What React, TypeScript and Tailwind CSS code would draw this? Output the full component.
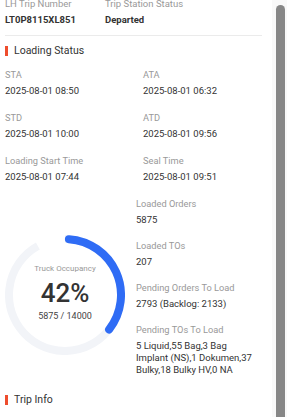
import React from "react";

const schedule = [
  { label: "STA", value: "2025-08-01 08:50" },
  { label: "ATA", value: "2025-08-01 06:32" },
  { label: "STD", value: "2025-08-01 10:00" },
  { label: "ATD", value: "2025-08-01 09:56" },
  { label: "Loading Start Time", value: "2025-08-01 07:44" },
  { label: "Seal Time", value: "2025-08-01 09:51" },
];

const counts = [
  { label: "Loaded Orders", value: "5875" },
  { label: "Loaded TOs", value: "207" },
  { label: "Pending Orders To Load", value: "2793 (Backlog: 2133)" },
  {
    label: "Pending TOs To Load",
    value: "5 Liquid,55 Bag,3 Bag Implant (NS),1 Dokumen,37 Bulky,18 Bulky HV,0 NA",
  },
];

function point(deg: number, r: number) {
  const rad = ((deg - 90) * Math.PI) / 180;
  return [60 + r * Math.cos(rad), 60 + r * Math.sin(rad)];
}

function arc(from: number, to: number, r = 56) {
  const [x1, y1] = point(from, r);
  const [x2, y2] = point(to, r);
  const large = to - from > 180 ? 1 : 0;
  return `M ${x1} ${y1} A ${r} ${r} 0 ${large} 1 ${x2} ${y2}`;
}

function SectionTitle({ title }: { title: string }) {
  return (
    <div className="flex items-center gap-[6px] h-4">
      <span className="w-[3px] h-[10px] bg-[#ee4d2d]" />
      <h3 className="text-[10.5px] leading-4 text-[#333]">{title}</h3>
    </div>
  );
}

function Field({ label, value }: { label: string; value: string }) {
  return (
    <div>
      <p className="text-[9.25px] leading-4 text-[#999]">{label}</p>
      <p className="mt-[2px] text-[9.5px] leading-[12px] text-[#333]">{value}</p>
    </div>
  );
}

function OccupancyRing() {
  return (
    <div className="relative w-[120px] h-[120px] shrink-0 mt-[39px]">
      <svg width="120" height="120" viewBox="0 0 120 120">
        <path d={arc(0, 331)} fill="none" stroke="#f2f4f8" strokeWidth="8" />
        <path d={arc(4, 128)} fill="none" stroke="#2f6cf5" strokeWidth="8" strokeLinecap="round" />
      </svg>
      <div className="absolute inset-0 flex flex-col items-center pt-[28px]">
        <p className="text-[8px] leading-3 text-[#999]">Truck Occupancy</p>
        <p className="mt-[5px] text-[26px] leading-[26px] font-medium text-[#333]">42%</p>
        <p className="mt-[4px] text-[9px] leading-3 text-[#444]">5875 / 14000</p>
      </div>
    </div>
  );
}

export default function App() {
  return (
    <div className="flex w-[287px] h-[417px] overflow-hidden bg-white font-['Roboto',sans-serif]">
      <div className="flex-1 pl-[5px] pr-[10px] -mt-[4px]">
        <div className="grid grid-cols-[100px_1fr]">
          <p className="text-[9.5px] leading-4 text-[#999]">LH Trip Number</p>
          <p className="text-[9.5px] leading-4 text-[#999]">Trip Station Status</p>
          <p className="text-[9.5px] leading-4 font-bold text-[#333]">LT0P8115XL851</p>
          <p className="text-[9.5px] leading-4 font-bold text-[#333]">Departed</p>
        </div>
        <div className="mt-[7px] border-t border-[#ebebeb]" />

        <div className="mt-[7px]">
          <SectionTitle title="Loading Status" />
        </div>

        <div className="mt-[8px] grid grid-cols-[138px_1fr] gap-y-[13px]">
          {schedule.map((f) => (
            <Field key={f.label} label={f.label} value={f.value} />
          ))}
        </div>

        <div className="mt-[13px] flex items-start gap-[11px]">
          <OccupancyRing />
          <div className="flex flex-col gap-[12px] w-[124px]">
            {counts.map((f) => (
              <Field key={f.label} label={f.label} value={f.value} />
            ))}
          </div>
        </div>

        <div className="mt-[16px]">
          <SectionTitle title="Trip Info" />
        </div>
      </div>

      <div className="w-[15px] bg-[#f9f9f9] pl-[4px] pt-[5px]">
        <div className="w-[9px] h-full rounded-t-full bg-[#878787]" />
      </div>
    </div>
  );
}
